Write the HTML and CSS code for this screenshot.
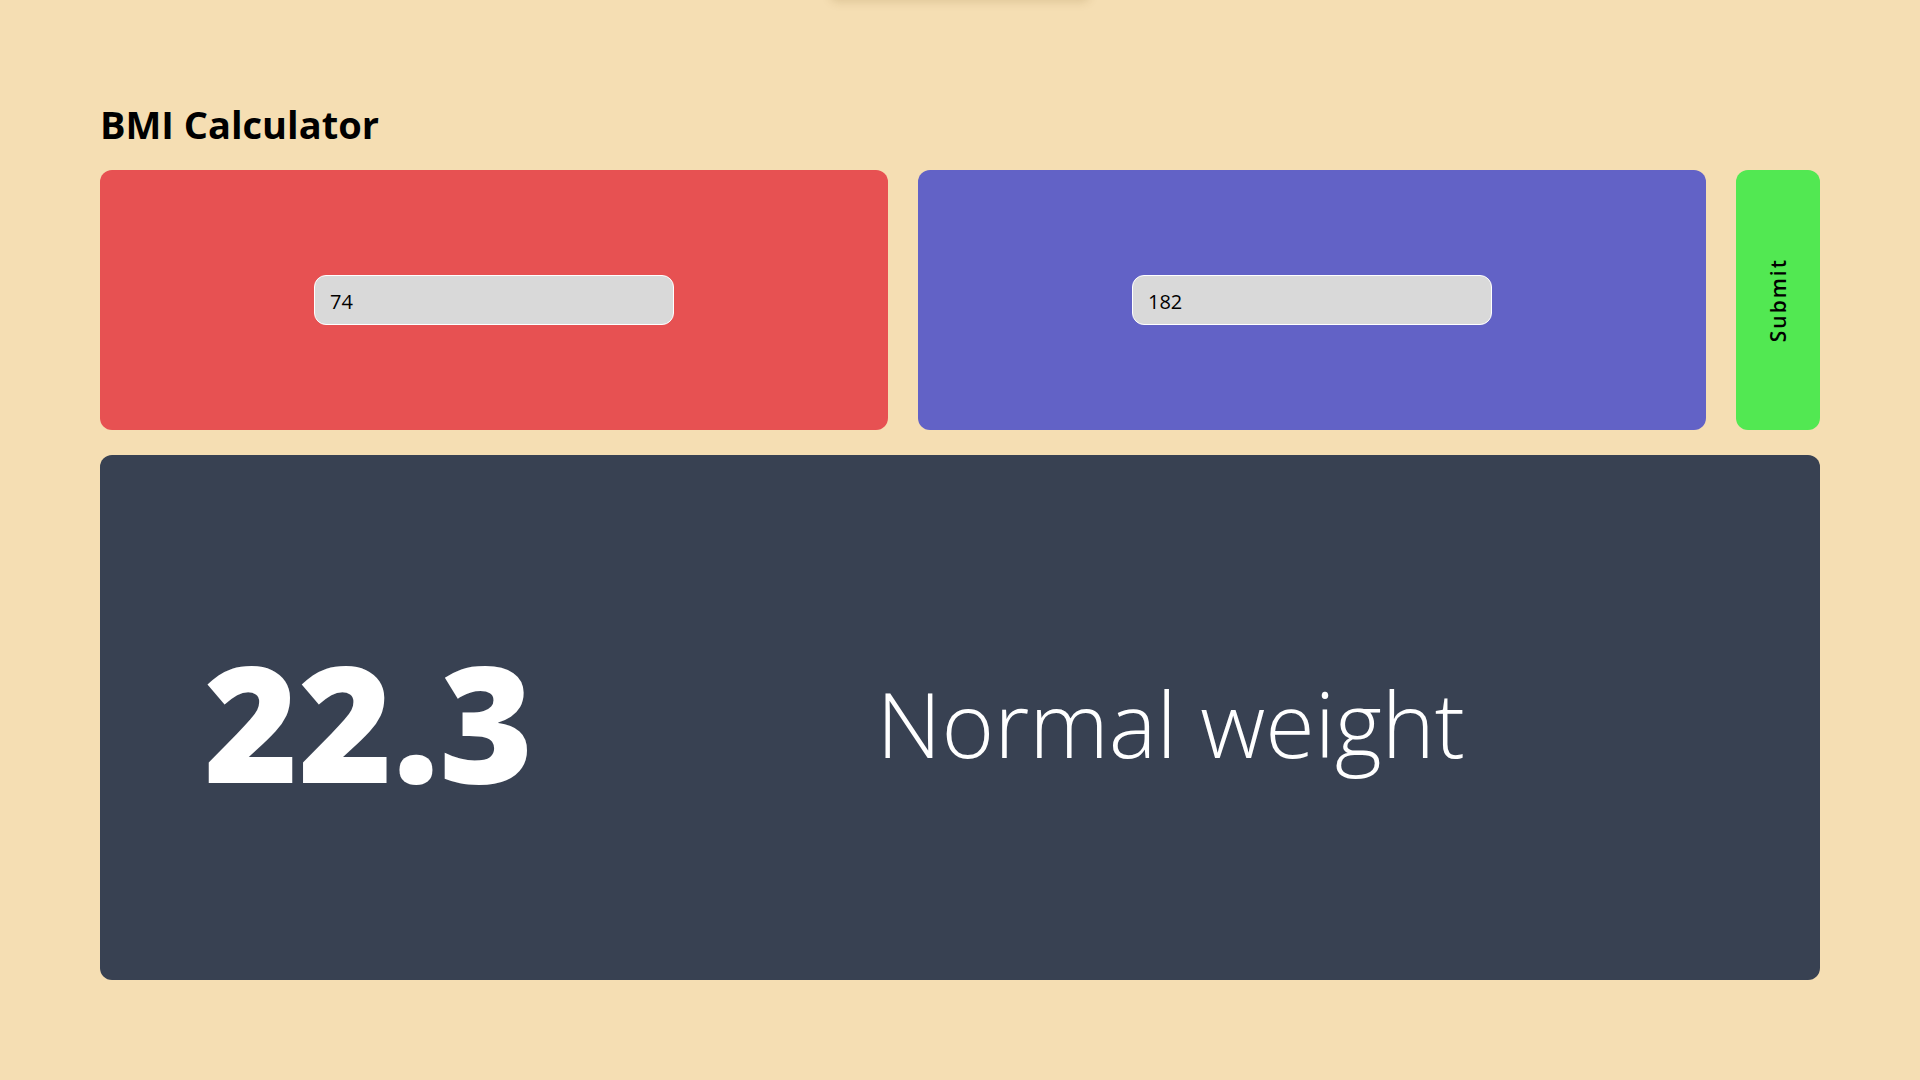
FILE: index.html
```html
<!DOCTYPE html>
<html lang="en">
<head>
<meta charset="utf-8">
<title>BMI Calculator</title>
<link rel="stylesheet" href="styles.css">
</head>
<body>
<div class="top-shadow"></div>
<main class="app">
  <h1 class="title">BMI Calculator</h1>
  <form class="inputs" onsubmit="return false">
    <div class="panel panel-weight">
      <input class="field" type="text" value="74">
    </div>
    <div class="panel panel-height">
      <input class="field" type="text" value="182">
    </div>
    <button class="submit" type="submit"><span class="submit-label">Submit</span></button>
  </form>
  <section class="result">
    <div class="bmi-value">22.3</div>
    <div class="bmi-label">Normal weight</div>
  </section>
</main>
</body>
</html>
```

FILE: styles.css
```css
html, body {
  margin: 0;
  padding: 0;
}

body {
  background: #f5deb3;
  font-family: "Open Sans", "Noto Sans", sans-serif;
  color: #000;
  min-height: 1080px;
  position: relative;
  overflow: hidden;
}

.top-shadow {
  position: absolute;
  top: -30px;
  left: 830px;
  width: 260px;
  height: 30px;
  background: #f5deb3;
  border-radius: 8px;
  box-shadow: 0 2px 10px rgba(120, 90, 30, 0.18);
}

.app {
  padding: 98px 100px 0 100px;
}

.title {
  margin: 0 0 20px 0;
  font-size: 38px;
  line-height: 52px;
  font-weight: 700;
}

.inputs {
  display: flex;
  gap: 30px;
  height: 260px;
  margin: 0 0 25px 0;
}

.panel {
  flex: 1 1 0;
  border-radius: 12px;
  display: flex;
  align-items: center;
  justify-content: center;
}

.panel-weight {
  background: #e75152;
}

.panel-height {
  background: #6262c6;
}

.field {
  box-sizing: border-box;
  width: 360px;
  height: 50px;
  padding: 2px 0 0 15px;
  border: 1px solid #ffffff;
  border-radius: 12px;
  background: #d9d9d9;
  font-family: "Open Sans", "Noto Sans", sans-serif;
  font-size: 20px;
  color: #000;
  outline: none;
}

.submit {
  flex: 0 0 84px;
  border: none;
  border-radius: 12px;
  background: #52e852;
  padding: 0;
  display: flex;
  align-items: center;
  justify-content: center;
  cursor: pointer;
}

.submit-label {
  writing-mode: vertical-rl;
  transform: rotate(180deg);
  font-family: "Open Sans", "Noto Sans", sans-serif;
  font-size: 21px;
  font-weight: 600;
  letter-spacing: 2px;
  color: #000;
}

.result {
  height: 525px;
  background: #384152;
  border-radius: 12px;
  display: flex;
  align-items: center;
  padding-left: 104px;
  gap: 343px;
  color: #fff;
}

.bmi-value {
  font-size: 161px;
  font-weight: 800;
  line-height: 1;
  margin-top: 6px;
}

.bmi-label {
  font-size: 90px;
  font-weight: 350;
  line-height: 1;
  margin-top: 10px;
}
```
